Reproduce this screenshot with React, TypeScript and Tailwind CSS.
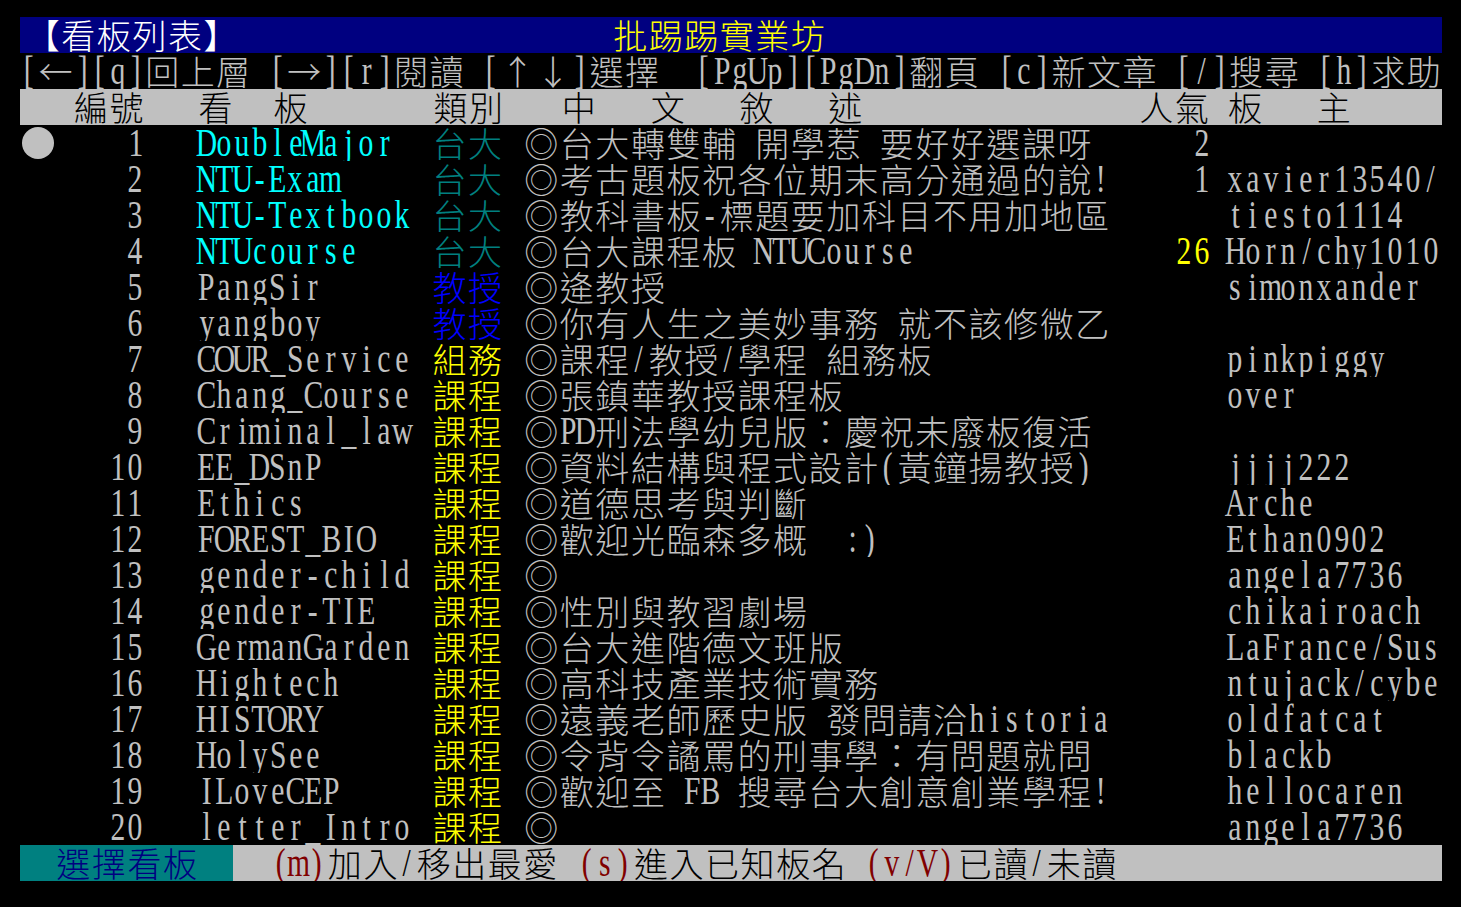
import React from "react";

type Seg = { t: string; c: string; b?: string; s?: string };

const C = {
  gray: "text-[#c0c0c0]",
  white: "text-white",
  yellow: "text-[#ffff00]",
  cyan: "text-[#00ffff]",
  teal: "text-[#008080]",
  blue: "text-[#0000ff]",
  red: "text-[#ff0000]",
  maroon: "text-[#800000]",
  black: "text-black",
  navy: "text-[#000080]",
};

const isWide = (ch: string) => {
  const code = ch.codePointAt(0) || 0;
  return code >= 0x2190 || code === 0x02c7;
};

const width = (s: string) => Array.from(s).reduce((n, ch) => n + (isWide(ch) ? 2 : 1), 0);
const padR = (s: string, n: number) => s + " ".repeat(Math.max(0, n - width(s)));
const padL = (s: string, n: number) => " ".repeat(Math.max(0, n - width(s))) + s;

function Cell({ ch, c, b = "", s = "" }: { ch: string; c: string; b?: string; s?: string }) {
  if (ch === "●") {
    return (
      <span className={`flex h-[36px] w-[35.55px] shrink-0 items-center justify-center ${b}`}>
        <span className="h-[32px] w-[32px] rounded-full bg-[#c0c0c0]" />
      </span>
    );
  }
  if (ch === "ˇ") {
    return (
      <span className={`flex h-[36px] w-[35.55px] shrink-0 justify-center ${b}`}>
        <span className={`font-['Liberation_Serif'] text-[40px] leading-[36px] -translate-y-[14px] ${c}`}>ˇ</span>
      </span>
    );
  }
  if (isWide(ch)) {
    return (
      <span
        className={`flex h-[36px] w-[35.55px] shrink-0 justify-center font-['Noto_Sans_CJK_TC',sans-serif] text-[34px] font-light leading-[36px] ${c} ${b}`}
      >
        <span className={`inline-block ${s}`}>{ch}</span>
      </span>
    );
  }
  return (
    <span
      className={`flex h-[36px] w-[17.775px] shrink-0 justify-center font-['Liberation_Serif',serif] text-[40px] leading-[36px] ${c} ${b}`}
    >
      <span className={`inline-block scale-x-[0.74] whitespace-pre ${s}`}>{ch === " " ? "\u00a0" : ch}</span>
    </span>
  );
}

function Line({ segs, bg = "" }: { segs: Seg[]; bg?: string }) {
  const cells: React.ReactNode[] = [];
  let col = 0;
  segs.forEach((sg, i) => {
    Array.from(sg.t).forEach((ch, j) => {
      cells.push(<Cell key={`${i}-${j}`} ch={ch} c={sg.c} b={sg.b} s={sg.s} />);
      col += isWide(ch) ? 2 : 1;
    });
  });
  for (; col < 80; col++) cells.push(<Cell key={`p${col}`} ch=" " c="" />);
  return <div className={`flex h-[36px] w-[1422px] overflow-hidden ${bg}`}>{cells}</div>;
}

type Board = {
  name: string;
  cat: string;
  catC: string;
  desc: string;
  pop?: string;
  popC?: string;
  mod: string;
  unread?: boolean;
  nameC?: string;
};

const boards: Board[] = [
  { name: "DoubleMajor", cat: "台大", catC: C.teal, desc: "◎台大轉雙輔 開學惹 要好好選課呀", pop: "2", mod: "", nameC: C.cyan },
  { name: "NTU-Exam", cat: "台大", catC: C.teal, desc: "◎考古題板祝各位期末高分通過的說!", pop: "1", mod: "xavier13540/", unread: true, nameC: C.cyan },
  { name: "NTU-Textbook", cat: "台大", catC: C.teal, desc: "◎教科書板-標題要加科目不用加地區", mod: "tiesto1114", unread: true, nameC: C.cyan },
  { name: "NTUcourse", cat: "台大", catC: C.teal, desc: "◎台大課程板 NTUCourse", pop: "26", popC: C.yellow, mod: "Horn/chy1010", unread: true, nameC: C.cyan },
  { name: "PangSir", cat: "教授", catC: C.blue, desc: "◎逄教授", mod: "simonxander" },
  { name: "yangboy", cat: "教授", catC: C.blue, desc: "◎你有人生之美妙事務 就不該修微乙", mod: "" },
  { name: "COUR_Service", cat: "組務", catC: C.yellow, desc: "◎課程/教授/學程 組務板", mod: "pinkpiggy" },
  { name: "Chang_Course", cat: "課程", catC: C.yellow, desc: "◎張鎮華教授課程板", mod: "over" },
  { name: "Criminal_law", cat: "課程", catC: C.yellow, desc: "◎PD刑法學幼兒版：慶祝未廢板復活", mod: "", unread: true },
  { name: "EE_DSnP", cat: "課程", catC: C.yellow, desc: "◎資料結構與程式設計(黃鐘揚教授)", mod: "jjjj222" },
  { name: "Ethics", cat: "課程", catC: C.yellow, desc: "◎道德思考與判斷", mod: "Arche" },
  { name: "FOREST_BIO", cat: "課程", catC: C.yellow, desc: "◎歡迎光臨森多概  :)", mod: "Ethan0902", unread: true },
  { name: "gender-child", cat: "課程", catC: C.yellow, desc: "◎", mod: "angela7736" },
  { name: "gender-TIE", cat: "課程", catC: C.yellow, desc: "◎性別與教習劇場", mod: "chikairoach", unread: true },
  { name: "GermanGarden", cat: "課程", catC: C.yellow, desc: "◎台大進階德文班版", mod: "LaFrance/Sus", unread: true },
  { name: "Hightech", cat: "課程", catC: C.yellow, desc: "◎高科技產業技術實務", mod: "ntujack/cybe", unread: true },
  { name: "HISTORY", cat: "課程", catC: C.yellow, desc: "◎遠義老師歷史版 發問請洽historia", mod: "oldfatcat" },
  { name: "HolySee", cat: "課程", catC: C.yellow, desc: "◎令背令譎罵的刑事學：有問題就問", mod: "blackb", unread: true },
  { name: "ILoveCEP", cat: "課程", catC: C.yellow, desc: "◎歡迎至 FB 搜尋台大創意創業學程!", mod: "hellocaren", unread: true },
  { name: "letter_Intro", cat: "課程", catC: C.yellow, desc: "◎", mod: "angela7736" },
];

function boardRow(b: Board, i: number): Seg[] {
  return [
    { t: i === 0 ? "●" : "  ", c: C.gray },
    { t: padL(String(i + 1), 5) + " ", c: C.gray },
    { t: b.unread ? "ˇ" : "  ", c: C.red },
    { t: padR(b.name, 12) + " ", c: b.nameC || C.gray },
    { t: b.cat, c: b.catC, s: "translate-x-[3px]" },
    { t: " " + padR(b.desc, 35), c: C.gray, s: "translate-x-[6px]" },
    { t: padL(b.pop || "", 4), c: b.popC || C.gray },
    { t: " " + b.mod, c: C.gray, s: "-translate-x-[2px]" },
  ];
}

export default function App() {
  return (
    <div className="h-[907px] w-[1461px] bg-black pl-[20px] pt-[17px]">
      <Line
        bg="bg-[#000080]"
        segs={[
          { t: "【看板列表】", c: C.white, s: "translate-x-[5px]" },
          { t: padR("", 21), c: C.white },
          { t: "批踢踢實業坊", c: C.yellow, s: "translate-x-[6px]" },
        ]}
      />
      <Line
        segs={[{ t: "[←][q]回上層 [→][r]閱讀 [↑↓]選擇  [PgUp][PgDn]翻頁 [c]新文章 [/]搜尋 [h]求助", c: C.gray }]}
      />
      <Line
        bg="bg-[#c0c0c0]"
        segs={[
          { t: "   編號   看  ", c: C.black },
          { t: "板       類別   ", c: C.black, s: "translate-x-[4px]" },
          { t: "中   文   敘   述", c: C.black, s: "translate-x-[8px]" },
          { t: "                人氣 板   主", c: C.black, s: "-translate-x-[1px]" },
        ]}
      />
      {boards.map((b, i) => (
        <Line key={b.name} segs={boardRow(b, i)} />
      ))}
      <Line
        bg="bg-[#c0c0c0]"
        segs={[
          { t: "  選擇看板  ", c: C.navy, b: "bg-[#008080]" },
          { t: "  ", c: C.black },
          { t: "(m)", c: C.maroon, s: "translate-x-[3px]" },
          { t: "加入/移出最愛 ", c: C.black, s: "translate-x-[5px]" },
          { t: "(s)", c: C.maroon, s: "translate-x-[7px]" },
          { t: "進入已知板名 ", c: C.black, s: "translate-x-[9px]" },
          { t: "(v/V)", c: C.maroon, s: "translate-x-[10px]" },
          { t: "已讀/未讀", c: C.black, s: "translate-x-[13px]" },
        ]}
      />
    </div>
  );
}
